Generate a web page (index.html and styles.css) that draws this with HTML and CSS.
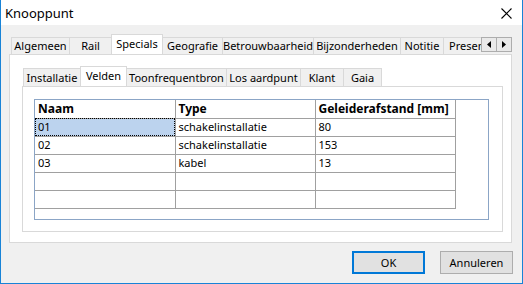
FILE: index.html
```html
<!DOCTYPE html>
<html>
<head>
<meta charset="utf-8">
<link rel="stylesheet" href="styles.css">
</head>
<body>
<div class="window">
  <div class="titlebar">
    <span class="title">Knooppunt</span>
    <svg class="close" width="11" height="11" viewBox="0 0 11 11"><path d="M0.5 0.5 L10.5 10.5 M10.5 0.5 L0.5 10.5" stroke="#000" stroke-width="1.1" fill="none"/></svg>
  </div>
  <div class="main">
    <div class="tabstrip">
      <div class="tabs">
        <div class="tab w-alg">Algemeen</div>
        <div class="tab w-rail">Rail</div>
        <div class="tab sel w-spec">Specials</div>
        <div class="tab w-geo">Geografie</div>
        <div class="tab w-betr">Betrouwbaarheid</div>
        <div class="tab w-bijz">Bijzonderheden</div>
        <div class="tab w-not">Notitie</div>
        <div class="tab w-pres">Presentatie</div>
      </div>
      <div class="scrollbtns">
        <div class="sbtn"><svg width="4" height="7" viewBox="0 0 4 7"><path d="M4 0 L0 3.5 L4 7 Z" fill="#000"/></svg></div>
        <div class="sbtn"><svg width="4" height="7" viewBox="0 0 4 7"><path d="M0 0 L4 3.5 L0 7 Z" fill="#000"/></svg></div>
      </div>
    </div>
    <div class="pane outer">
      <div class="tabs inner-tabs">
        <div class="tab small w-inst">Installatie</div>
        <div class="tab small sel w-vel">Velden</div>
        <div class="tab small w-toon">Toonfrequentbron</div>
        <div class="tab small w-los">Los aardpunt</div>
        <div class="tab small w-klant">Klant</div>
        <div class="tab small w-gaia">Gaia</div>
      </div>
      <div class="pane inner">
        <div class="grid">
          <table>
            <thead>
              <tr><th>Naam</th><th>Type</th><th>Geleiderafstand [mm]</th></tr>
            </thead>
            <tbody>
              <tr><td class="focus">01</td><td>schakelinstallatie</td><td>80</td></tr>
              <tr><td>02</td><td>schakelinstallatie</td><td>153</td></tr>
              <tr><td>03</td><td>kabel</td><td>13</td></tr>
              <tr><td></td><td></td><td></td></tr>
              <tr><td></td><td></td><td></td></tr>
            </tbody>
          </table>
        </div>
      </div>
    </div>
    <div class="buttons">
      <button class="btn default">OK</button>
      <button class="btn">Annuleren</button>
    </div>
  </div>
</div>
</body>
</html>
```
FILE: styles.css
```css
* { box-sizing: border-box; }
html, body { margin: 0; padding: 0; background: #fff; }
body {
  font-family: "Noto Sans", "Liberation Sans", sans-serif;
  font-size: 11px;
  color: #000;
}
.window {
  width: 523px;
  height: 284px;
  border: 1px solid #1883d7;
  border-top: none;
  display: flex;
  flex-direction: column;
  background: #f0f0f0;
}
.titlebar {
  height: 25px;
  background: #fff;
  display: flex;
  align-items: center;
  justify-content: space-between;
  padding: 0 10px 0 4px;
  flex: none;
}
.title { font-size: 13px; line-height: 16px; padding-top: 1px; }
.close { display: block; margin-top: 1px; }
.main {
  flex: 1;
  padding: 9px 10px 0 8px;
  display: flex;
  flex-direction: column;
}
.tabstrip {
  display: flex;
  align-items: flex-start;
  height: 20px;
  margin-left: 2px;
}
.tabs {
  display: flex;
  align-items: flex-end;
  height: 20px;
  overflow: hidden;
  width: 470px;
  flex: none;
}
.tab {
  flex: none;
  height: 17px;
  border: 1px solid #d9d9d9;
  border-bottom: none;
  border-right: none;
  background: #f0f0f0;
  line-height: 16px;
  text-align: center;
  white-space: nowrap;
  overflow: hidden;
}
.tab.sel {
  height: 21px;
  margin-bottom: -1px;
  background: #fff;
  border-right: 1px solid #d9d9d9;
  position: relative;
  z-index: 1;
  line-height: 17px;
}
.tab.sel + .tab { border-left: none; }
.w-alg { width: 58px; }
.w-rail { width: 42px; }
.w-spec { width: 52px; }
.w-geo { width: 59px; }
.w-betr { width: 91px; }
.w-bijz { width: 87px; }
.w-not { width: 43px; }
.w-pres { width: 60px; text-align: left; padding-left: 5px; }
.scrollbtns {
  display: flex;
  margin-top: 3px;
  flex: none;
}
.sbtn {
  width: 16px;
  height: 15px;
  border: 1px solid #adadad;
  background: #e9e9e9;
  display: flex;
  align-items: center;
  justify-content: center;
}
.sbtn + .sbtn { border-left: none; width: 15px; }
.pane {
  border: 1px solid #d9d9d9;
  background: #fff;
}
.outer {
  width: 503px;
  height: 189px;
  padding: 11px 8px 10px 12px;
  display: flex;
  flex-direction: column;
}
.inner-tabs {
  margin-left: 1px;
  width: auto;
}
.tab.small { height: 18px; line-height: 17px; }
.tab.small.sel { height: 21px; line-height: 18px; }
.w-inst { width: 57px; }
.w-vel { width: 47px; }
.w-toon { width: 99px; }
.w-los { width: 74px; }
.w-klant { width: 43px; }
.w-gaia { width: 39px; border-right: 1px solid #d9d9d9 !important; }
.inner {
  width: 481px;
  height: 146px;
  padding: 12px 0 0 11px;
}
.grid {
  width: 455px;
  height: 121px;
  border: 1px solid #8ba5c6;
  background: #fff;
}
table {
  border-collapse: collapse;
  table-layout: fixed;
  width: 420px;
}
th, td {
  width: 140px;
  height: 18px;
  padding: 0 0 0 3px;
  border-right: 1px solid #a0a0a0;
  border-bottom: 1px solid #a0a0a0;
  text-align: left;
  white-space: nowrap;
  overflow: hidden;
  line-height: 16px;
  font-weight: normal;
}
th { font-weight: bold; font-size: 12px; height: 18px; }
td.focus {
  background: #bcd3ee;
  outline: 1px dotted #000;
  outline-offset: -1px;
}
.buttons {
  display: flex;
  justify-content: flex-end;
  gap: 15px;
  margin-top: 8px;
  margin-right: -1px;
}
.btn {
  width: 73px;
  height: 23px;
  font-family: inherit;
  font-size: 11px;
  color: #000;
  background: #e1e1e1;
  border: 1px solid #adadad;
  padding: 0;
  margin: 0;
}
.btn.default {
  border: 2px solid #0078d7;
}
```
